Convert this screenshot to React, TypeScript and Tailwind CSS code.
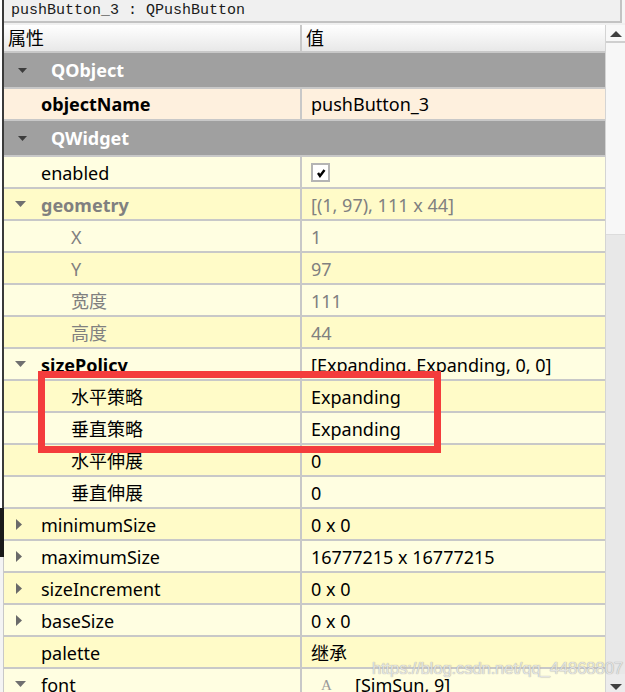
import React from "react";

type Bg = "light" | "dark" | "peach";
type Row = {
  label: string;
  value?: React.ReactNode;
  level: 0 | 1;
  arrow?: "down" | "right";
  bold?: boolean;
  gray?: boolean;
  bg: Bg;
};

const DownTri = ({ color = "#707070" }: { color?: string }) => (
  <svg width="11" height="6" viewBox="0 0 11 6">
    <polygon points="0,0 11,0 5.5,6" fill={color} />
  </svg>
);

const RightTri = () => (
  <svg width="6" height="11" viewBox="0 0 6 11">
    <polygon points="0,0 6,5.5 0,11" fill="#6a6a6a" />
  </svg>
);

const Check = () => (
  <div className="w-[19px] h-[19px] border-2 border-[#b4b4b4] bg-white flex items-center justify-center">
    <svg width="10" height="10" viewBox="0 0 10 10">
      <path d="M2 5 L4 8 L8.5 2" stroke="#000" strokeWidth="2.4" fill="none" />
    </svg>
  </div>
);

const rows: Row[] = [
  { label: "enabled", value: <Check />, level: 0, bg: "light" },
  { label: "geometry", value: "[(1, 97), 111 x 44]", level: 0, arrow: "down", bold: true, gray: true, bg: "dark" },
  { label: "X", value: "1", level: 1, gray: true, bg: "light" },
  { label: "Y", value: "97", level: 1, gray: true, bg: "dark" },
  { label: "宽度", value: "111", level: 1, gray: true, bg: "light" },
  { label: "高度", value: "44", level: 1, gray: true, bg: "dark" },
  { label: "sizePolicy", value: "[Expanding, Expanding, 0, 0]", level: 0, arrow: "down", bold: true, bg: "light" },
  { label: "水平策略", value: "Expanding", level: 1, bg: "dark" },
  { label: "垂直策略", value: "Expanding", level: 1, bg: "light" },
  { label: "水平伸展", value: "0", level: 1, bg: "dark" },
  { label: "垂直伸展", value: "0", level: 1, bg: "light" },
  { label: "minimumSize", value: "0 x 0", level: 0, arrow: "right", bg: "dark" },
  { label: "maximumSize", value: "16777215 x 16777215", level: 0, arrow: "right", bg: "light" },
  { label: "sizeIncrement", value: "0 x 0", level: 0, arrow: "right", bg: "dark" },
  { label: "baseSize", value: "0 x 0", level: 0, arrow: "right", bg: "light" },
  { label: "palette", value: "继承", level: 0, bg: "dark" },
  {
    label: "font",
    value: (
      <div className="flex items-center">
        <span className="w-[44px] pl-[10px] text-[#9a9a9a] text-[15px] font-['Liberation_Serif',serif]">A</span>
        <span>[SimSun, 9]</span>
      </div>
    ),
    level: 0,
    arrow: "down",
    bg: "light",
  },
];

const bgClass: Record<Bg, string> = {
  light: "bg-[#fffee1]",
  dark: "bg-[#fffbc8]",
  peach: "bg-[#fef0de]",
};

function PropRow({ r }: { r: Row }) {
  const color = r.gray ? "text-[#808080]" : "text-black";
  return (
    <div className={`flex h-[32px] shrink-0 border-b-2 border-[#c8c8c8] ${bgClass[r.bg]}`}>
      <div className="w-[298px] flex items-center border-r-2 border-[#c8c8c8]">
        {r.level === 0 ? (
          <div className="w-[37px] flex items-center pl-[11px]">
            {r.arrow === "down" && <DownTri />}
            {r.arrow === "right" && (
              <span className="pl-[1px] flex">
                <RightTri />
              </span>
            )}
          </div>
        ) : (
          <div className="w-[67px]" />
        )}
        <span className={`text-[18px] leading-[30px] pt-[1px] ${r.bold ? "font-bold" : ""} ${color}`}>{r.label}</span>
      </div>
      <div className={`flex-1 flex items-center pl-[9px] pt-[1px] text-[18px] leading-[30px] ${color}`}>{r.value}</div>
    </div>
  );
}

function GroupRow({ label }: { label: string }) {
  return (
    <div className="flex items-center h-[36px] shrink-0 bg-[#a0a0a0] border-b-2 border-[#c8c8c8]">
      <div className="w-[47px] pl-[14px] flex items-center">
        <svg width="9" height="5" viewBox="0 0 9 5">
          <polygon points="0,0 9,0 4.5,5" fill="#3c3c3c" />
        </svg>
      </div>
      <span className="text-[18px] font-bold text-white pt-[1px]">{label}</span>
    </div>
  );
}

export default function App() {
  return (
    <div className="w-[625px] h-[692px] overflow-hidden relative flex bg-white font-['Noto_Sans','Noto_Sans_CJK_SC',sans-serif]">
      {/* left edge strip */}
      <div className="w-[4px] shrink-0 flex flex-col">
        <div className="h-[508px] flex">
          <div className="w-[2px] bg-white" />
          <div className="w-[2px] bg-[#3a3a3a]" />
        </div>
        <div className="h-[49px] bg-[#1a1a1a]" />
        <div className="flex-1 flex">
          <div className="w-[3px] bg-[#f4f4f4]" />
          <div className="w-[1px] bg-[#c8c8c8]" />
        </div>
      </div>

      <div className="w-[621px] flex flex-col">
        {/* title */}
        <div className="flex h-[23px] shrink-0">
          <div className="w-[618px] h-[23px] bg-[#f0f0f0] border-r-2 border-b-2 border-[#c3c3c3] pl-[7px] pt-[1px] flex items-center text-[15px] text-[#1a1a1a] font-['Liberation_Mono',monospace]">
            pushButton_3 : QPushButton
          </div>
          <div className="flex-1 bg-[#f6f6f6]" />
        </div>
        <div className="h-[2px] shrink-0 bg-[#f0f0f0]" />

        <div className="flex h-[667px] overflow-hidden">
          {/* table */}
          <div className="w-[601px] flex flex-col overflow-hidden">
            <div className="flex h-[28px] shrink-0 border-b-2 border-[#c8c8c8] bg-linear-to-b from-[#ffffff] to-[#e8e8e8]">
              <div className="w-[298px] flex items-center pl-[4px] pt-[1px] border-r-2 border-[#c8c8c8] text-[18px] text-black">属性</div>
              <div className="flex-1 flex items-center pl-[4px] pt-[1px] text-[18px] text-black">值</div>
            </div>
            <GroupRow label="QObject" />
            <div className="flex h-[32px] shrink-0 border-b-2 border-[#c8c8c8] bg-[#fef0de]">
              <div className="w-[298px] flex items-center border-r-2 border-[#c8c8c8]">
                <div className="w-[37px]" />
                <span className="text-[18px] font-bold text-black pt-[1px]">objectName</span>
              </div>
              <div className="flex-1 flex items-center pl-[9px] pt-[1px] text-[18px] text-black">pushButton_3</div>
            </div>
            <GroupRow label="QWidget" />
            {rows.map((r) => (
              <PropRow key={r.label} r={r} />
            ))}
          </div>

          {/* scrollbar */}
          <div className="w-[20px] flex flex-col bg-[#e8e8e8] border-l border-[#d4d4d4]">
            <div className="h-[18px] shrink-0 flex justify-center pt-[6px] bg-[#f8f8f8] border-b-2 border-[#cfcfcf]">
              <svg width="12" height="6" viewBox="0 0 12 6">
                <polygon points="0,6 12,6 6,0" fill="#404040" />
              </svg>
            </div>
            <div className="h-[192px] shrink-0 bg-[#f7f7f7] border-b border-[#dcdcdc]" />
            <div className="flex-1" />
            <div className="h-[18px] shrink-0 flex justify-center pt-[10px] bg-[#ececec]">
              <svg width="12" height="6" viewBox="0 0 12 6">
                <polygon points="0,0 12,0 6,6" fill="#404040" />
              </svg>
            </div>
          </div>
        </div>
      </div>

      {/* red highlight box */}
      <div className="absolute left-[38px] top-[371px] w-[403px] h-[82px] border-[7px] border-[#f43c3c]" />

      {/* watermark */}
      <div className="absolute left-[372px] top-[656px] text-[17px] tracking-[-0.3px] text-[#e2e2e2] font-['Liberation_Sans',sans-serif] [text-shadow:0_0_1px_#8a8a8a] opacity-90">
        https://blog.csdn.net/qq_44868807
      </div>
    </div>
  );
}
